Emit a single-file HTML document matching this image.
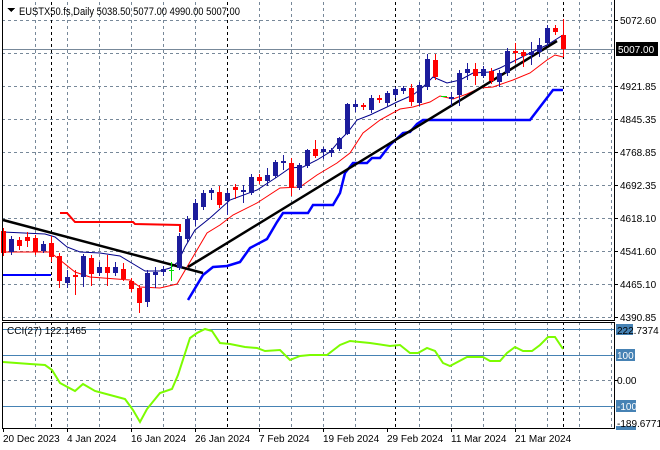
<!DOCTYPE html>
<html><head><meta charset="utf-8"><style>
html,body{margin:0;padding:0;background:#fff;}
svg{display:block;}
text{font-family:"Liberation Sans",sans-serif;font-size:10px;fill:#000;}
</style></head><body>
<svg width="660" height="450" viewBox="0 0 660 450" xmlns="http://www.w3.org/2000/svg" shape-rendering="crispEdges">
<rect width="660" height="450" fill="#fff"/>
<g stroke="#778899" stroke-width="1" stroke-dasharray="3,3">
<path d="M35.5 2V320M67.5 2V320M99.5 2V320M131.5 2V320M163.5 2V320M195.5 2V320M259.5 2V320M291.5 2V320M323.5 2V320M355.5 2V320M419.5 2V320M451.5 2V320M483.5 2V320M515.5 2V320M547.5 2V320M579.5 2V320M611.5 2V320"/>
<path d="M35.5 322V428M67.5 322V428M99.5 322V428M131.5 322V428M163.5 322V428M195.5 322V428M259.5 322V428M291.5 322V428M323.5 322V428M355.5 322V428M419.5 322V428M451.5 322V428M483.5 322V428M515.5 322V428M547.5 322V428M579.5 322V428M611.5 322V428"/>
<path d="M2 20.5H614M2 53.5H614M2 86.5H614M2 119.5H614M2 152.5H614M2 185.5H614M2 218.5H614M2 251.5H614M2 284.5H614M2 317.5H614M2 380.5H614"/>
</g>
<g stroke="#000" stroke-width="1" stroke-dasharray="3,3">
<path d="M51.5 2V320M227.5 2V320M395.5 2V320M563.5 2V320M51.5 322V428M227.5 322V428M395.5 322V428M563.5 322V428"/>
</g>
<path d="M2 49.5H614" stroke="#778899"/>
<path d="M2 329.5H614M2 355.5H614M2 406.5H614" stroke="#4682b4"/>
<g fill="none" shape-rendering="auto">
<polyline stroke="#ff0000" stroke-width="2" points="60,213 67,213 75,222 133,222 135,224 180,225 180,232"/>
<polyline stroke="#0000ff" stroke-width="2" points="3,275 51,275"/>
<polyline stroke="#0000ff" stroke-width="2.5" points="188,300 203,275 213,267 227,266 240,262 250,248 267,239 277,222 283,213 308,213 313,205 333,205 340,193 345,173 353,163 367,163 372,158 380,158 390,145 403,133 410,132 417,124 423,120 530,120 553,90 563,90"/>
<polyline stroke="#00008b" stroke-width="1" points="3,232 45,234 55,237 67,247 80,252 100,253 120,256 135,265 145,271 160,271 170,268 178,262 185,247 195,230 210,218 230,200 257,190 277,177 290,168 303,167 317,160 330,152 340,140 348,132 357,120 370,115 387,107 397,102 413,95 423,87 433,77 447,83 460,80 473,73 490,72 500,68 510,63 530,53 547,45 563,35"/>
<polyline stroke="#ff0000" stroke-width="1" points="3,252 50,252 60,260 75,272 90,277 130,280 140,287 160,288 177,284 187,267 207,233 220,225 233,215 257,203 280,188 300,187 317,175 337,163 350,153 363,133 380,120 400,109 413,107 430,102 440,96 453,99 467,94 480,88 493,87 513,80 530,73 547,60 555,55 563,57"/>
<polyline stroke="#000" stroke-width="2.5" points="3,220 203,273"/>
<polyline stroke="#000" stroke-width="2.5" points="188,267 557,41"/>
</g>
<g fill="#ff0000">
<rect x="3" y="228" width="1" height="28"/><rect x="1" y="231" width="5" height="22"/>
<rect x="19" y="237" width="1" height="13"/><rect x="17" y="240" width="5" height="6"/>
<rect x="27" y="232" width="1" height="15"/><rect x="25" y="237" width="5" height="4"/>
<rect x="35" y="235" width="1" height="20"/><rect x="33" y="238" width="5" height="14"/>
<rect x="51" y="236" width="1" height="26"/><rect x="49" y="243" width="5" height="14"/>
<rect x="59" y="253" width="1" height="35"/><rect x="57" y="256" width="5" height="25"/>
<rect x="75" y="270" width="1" height="25"/><rect x="73" y="275" width="5" height="2"/>
<rect x="91" y="255" width="1" height="31"/><rect x="89" y="258" width="5" height="16"/>
<rect x="107" y="255" width="1" height="31"/><rect x="105" y="267" width="5" height="6"/>
<rect x="123" y="263" width="1" height="18"/><rect x="121" y="269" width="5" height="10"/>
<rect x="131" y="278" width="1" height="14"/><rect x="129" y="281" width="5" height="8"/>
<rect x="139" y="285" width="1" height="28"/><rect x="137" y="288" width="5" height="15"/>
<rect x="219" y="186" width="1" height="22"/><rect x="217" y="192" width="5" height="13"/>
<rect x="235" y="184" width="1" height="15"/><rect x="233" y="187" width="5" height="3"/>
<rect x="259" y="174" width="1" height="10"/><rect x="257" y="177" width="5" height="4"/>
<rect x="291" y="158" width="1" height="38"/><rect x="289" y="163" width="5" height="25"/>
<rect x="315" y="140" width="1" height="18"/><rect x="313" y="149" width="5" height="7"/>
<rect x="363" y="103" width="1" height="7"/><rect x="361" y="105" width="5" height="2"/>
<rect x="379" y="95" width="1" height="8"/><rect x="377" y="98" width="5" height="2"/>
<rect x="411" y="84" width="1" height="22"/><rect x="409" y="88" width="5" height="14"/>
<rect x="435" y="54" width="1" height="26"/><rect x="433" y="60" width="5" height="17"/>
<rect x="475" y="63" width="1" height="22"/><rect x="473" y="69" width="5" height="7"/>
<rect x="491" y="68" width="1" height="16"/><rect x="489" y="71" width="5" height="10"/>
<rect x="515" y="43" width="1" height="20"/><rect x="513" y="51" width="5" height="2"/>
<rect x="523" y="50" width="1" height="17"/><rect x="521" y="52" width="5" height="4"/>
<rect x="555" y="25" width="1" height="10"/><rect x="553" y="28" width="5" height="4"/>
<rect x="563" y="19" width="1" height="38"/><rect x="561" y="35" width="5" height="14"/>
</g>
<g fill="#1c1c9c">
<rect x="11" y="236" width="1" height="19"/><rect x="9" y="239" width="5" height="13"/>
<rect x="43" y="241" width="1" height="12"/><rect x="41" y="244" width="5" height="7"/>
<rect x="67" y="270" width="1" height="18"/><rect x="65" y="277" width="5" height="6"/>
<rect x="83" y="254" width="1" height="33"/><rect x="81" y="256" width="5" height="21"/>
<rect x="99" y="262" width="1" height="14"/><rect x="97" y="267" width="5" height="6"/>
<rect x="115" y="262" width="1" height="14"/><rect x="113" y="267" width="5" height="6"/>
<rect x="147" y="270" width="1" height="37"/><rect x="145" y="273" width="5" height="29"/>
<rect x="155" y="267" width="1" height="21"/><rect x="153" y="272" width="5" height="3"/>
<rect x="163" y="266" width="1" height="10"/><rect x="161" y="269" width="5" height="3"/>
<rect x="179" y="233" width="1" height="37"/><rect x="177" y="236" width="5" height="32"/>
<rect x="187" y="216" width="1" height="26"/><rect x="185" y="219" width="5" height="20"/>
<rect x="195" y="199" width="1" height="27"/><rect x="193" y="203" width="5" height="17"/>
<rect x="203" y="190" width="1" height="20"/><rect x="201" y="193" width="5" height="14"/>
<rect x="211" y="188" width="1" height="12"/><rect x="209" y="190" width="5" height="3"/>
<rect x="227" y="190" width="1" height="25"/><rect x="225" y="193" width="5" height="8"/>
<rect x="243" y="185" width="1" height="18"/><rect x="241" y="190" width="5" height="2"/>
<rect x="251" y="174" width="1" height="21"/><rect x="249" y="177" width="5" height="16"/>
<rect x="267" y="168" width="1" height="18"/><rect x="265" y="175" width="5" height="6"/>
<rect x="275" y="160" width="1" height="18"/><rect x="273" y="162" width="5" height="14"/>
<rect x="283" y="155" width="1" height="15"/><rect x="281" y="161" width="5" height="2"/>
<rect x="299" y="163" width="1" height="27"/><rect x="297" y="165" width="5" height="23"/>
<rect x="307" y="149" width="1" height="19"/><rect x="305" y="150" width="5" height="16"/>
<rect x="323" y="147" width="1" height="12"/><rect x="321" y="149" width="5" height="3"/>
<rect x="331" y="148" width="1" height="9"/><rect x="329" y="150" width="5" height="3"/>
<rect x="339" y="137" width="1" height="14"/><rect x="337" y="138" width="5" height="11"/>
<rect x="347" y="103" width="1" height="32"/><rect x="345" y="104" width="5" height="30"/>
<rect x="355" y="100" width="1" height="12"/><rect x="353" y="104" width="5" height="3"/>
<rect x="371" y="95" width="1" height="18"/><rect x="369" y="98" width="5" height="12"/>
<rect x="387" y="91" width="1" height="16"/><rect x="385" y="93" width="5" height="10"/>
<rect x="395" y="87" width="1" height="11"/><rect x="393" y="89" width="5" height="6"/>
<rect x="403" y="86" width="1" height="8"/><rect x="401" y="88" width="5" height="3"/>
<rect x="419" y="82" width="1" height="24"/><rect x="417" y="85" width="5" height="18"/>
<rect x="427" y="54" width="1" height="36"/><rect x="425" y="59" width="5" height="28"/>
<rect x="451" y="92" width="1" height="14"/><rect x="449" y="97" width="5" height="2"/>
<rect x="459" y="70" width="1" height="36"/><rect x="457" y="73" width="5" height="22"/>
<rect x="467" y="63" width="1" height="17"/><rect x="465" y="69" width="5" height="4"/>
<rect x="483" y="66" width="1" height="12"/><rect x="481" y="69" width="5" height="7"/>
<rect x="499" y="70" width="1" height="17"/><rect x="497" y="73" width="5" height="9"/>
<rect x="507" y="48" width="1" height="28"/><rect x="505" y="51" width="5" height="22"/>
<rect x="531" y="42" width="1" height="23"/><rect x="529" y="52" width="5" height="3"/>
<rect x="539" y="38" width="1" height="19"/><rect x="537" y="45" width="5" height="7"/>
<rect x="547" y="25" width="1" height="21"/><rect x="545" y="28" width="5" height="15"/>
</g>
<g fill="#00dd00">
<rect x="171" y="262" width="1" height="19"/><rect x="169" y="270" width="5" height="1"/>
<rect x="441" y="96" width="6" height="1"/>
</g>
<polyline fill="none" stroke="#7cfc00" stroke-width="2" shape-rendering="auto" points="3,362 30,364 45,365 52,370 60,383 75,391 83,384 95,391 110,395 125,399 133,410 140,422 147,409 160,393 172,389 178,375 190,338 197,333 205,329 212,331 220,343 230,344 240,346 245,347 257,348 265,351 280,350 290,360 300,356 310,355 327,355 340,345 350,341 370,343 390,346 400,345 410,353 418,353 427,348 435,351 443,363 450,366 467,357 483,357 490,361 500,361 507,353 515,347 523,351 532,351 540,345 548,337 555,337 563,349"/>
<path d="M2.5 0V320.5H614.5V0" fill="none" stroke="#000"/>
<path d="M2.5 322.5H614.5V428.5H2.5Z" fill="none" stroke="#000"/>
<path d="M7 8H15L11 12Z" fill="#000"/>
<text x="19" y="15" textLength="221" lengthAdjust="spacingAndGlyphs" style="font-size:11px">EUSTX50.fs,Daily  5038.50 5077.00 4990.00 5007.00</text>
<g stroke="#000"><path d="M614 20.5H618M614 86.5H618M614 119.5H618M614 152.5H618M614 185.5H618M614 218.5H618M614 251.5H618M614 284.5H618M614 317.5H618M614 380.5H618"/></g>
<text x="620" y="24">5072.60</text>
<text x="620" y="90">4921.85</text>
<text x="620" y="123">4845.35</text>
<text x="620" y="156">4768.85</text>
<text x="620" y="189">4692.35</text>
<text x="620" y="222">4618.10</text>
<text x="620" y="255">4541.60</text>
<text x="620" y="288">4465.10</text>
<text x="620" y="321">4390.85</text>
<rect x="616" y="42" width="42" height="14" fill="#000"/>
<text x="618" y="53" style="fill:#fff">5007.00</text>
<rect x="616" y="324" width="17" height="11" fill="#4682b4"/>
<text x="617" y="334">222.7374</text>
<rect x="616" y="349" width="19" height="12" fill="#4682b4"/>
<text x="617" y="359" style="fill:#fff">100</text>
<text x="617" y="384">0.00</text>
<rect x="616" y="400" width="20" height="12" fill="#4682b4"/>
<text x="617" y="410" style="fill:#fff">-100</text>
<rect x="616" y="426" width="20" height="4" fill="#4682b4"/>
<text x="617" y="427">-189.6771</text>
<g stroke="#000"><path d="M3.5 428V432M67.5 428V432M131.5 428V432M195.5 428V432M259.5 428V432M323.5 428V432M387.5 428V432M451.5 428V432M515.5 428V432"/></g>
<text x="3" y="442">20 Dec 2023</text>
<text x="67" y="442">4 Jan 2024</text>
<text x="131" y="442">16 Jan 2024</text>
<text x="195" y="442">26 Jan 2024</text>
<text x="259" y="442">7 Feb 2024</text>
<text x="323" y="442">19 Feb 2024</text>
<text x="387" y="442">29 Feb 2024</text>
<text x="451" y="442">11 Mar 2024</text>
<text x="515" y="442">21 Mar 2024</text>
<text x="7" y="334">CCI(27) 122.1465</text>
</svg>
</body></html>
